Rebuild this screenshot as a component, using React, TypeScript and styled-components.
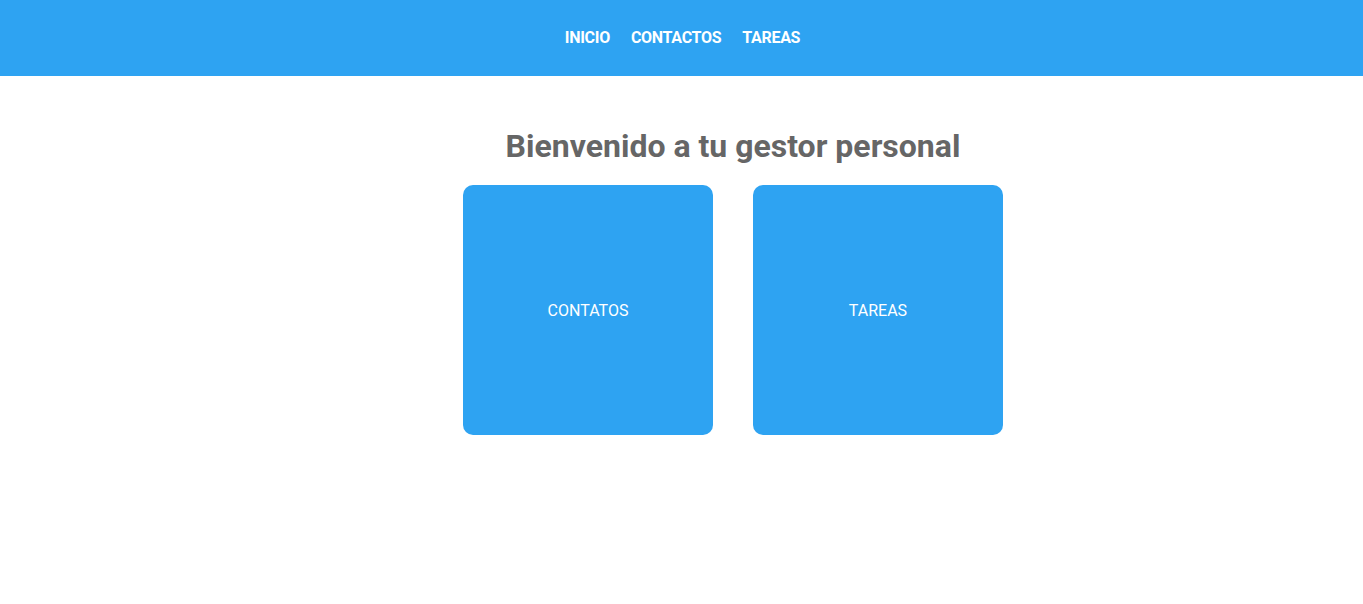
import React from "react";
import styled, { createGlobalStyle } from "styled-components";

const Global = createGlobalStyle`
  html, body { margin: 0; padding: 0; background: #fff; }
  body { font-family: Roboto, "Liberation Sans", Arial, sans-serif; }
`;

const Header = styled.header`
  height: 76px;
  background: #2ea3f2;
  display: flex;
  align-items: center;
  justify-content: center;
`;

const Nav = styled.nav`
  display: flex;
  gap: 21px;
  padding-left: 3px;
  padding-right: 1px;
  padding-bottom: 2px;
`;

const NavLink = styled.a`
  color: #fff;
  font-weight: 700;
  font-size: 16px;
  letter-spacing: -0.3px;
  text-decoration: none;
  text-transform: uppercase;
`;

const Main = styled.main`
  display: flex;
  flex-direction: column;
  align-items: center;
  padding-left: 103px;
  padding-top: 51px;
`;

const Title = styled.h1`
  margin: 0 0 20px;
  font-size: 32px;
  font-weight: 700;
  color: #666;
`;

const Cards = styled.div`
  display: flex;
  gap: 40px;
`;

const Card = styled.a`
  width: 250px;
  height: 250px;
  border-radius: 10px;
  background: #2ea3f2;
  color: #fff;
  display: flex;
  align-items: center;
  justify-content: center;
  font-size: 16px;
  text-decoration: none;
  text-transform: uppercase;
`;

export default function App() {
  return (
    <>
      <Global />
      <Header>
        <Nav>
          <NavLink href="#">Inicio</NavLink>
          <NavLink href="#">Contactos</NavLink>
          <NavLink href="#">Tareas</NavLink>
        </Nav>
      </Header>
      <Main>
        <Title>Bienvenido a tu gestor personal</Title>
        <Cards>
          <Card href="#">Contatos</Card>
          <Card href="#">Tareas</Card>
        </Cards>
      </Main>
    </>
  );
}
